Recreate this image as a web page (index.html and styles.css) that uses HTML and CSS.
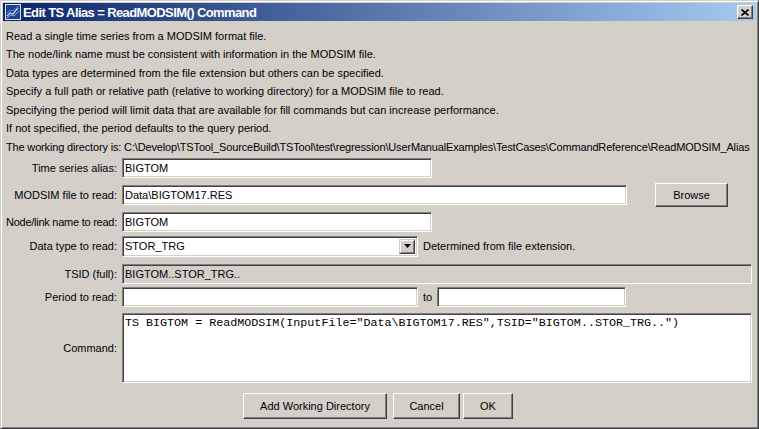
FILE: index.html
```html
<!DOCTYPE html>
<html>
<head>
<meta charset="utf-8">
<title>Edit TS Alias = ReadMODSIM() Command</title>
<link rel="stylesheet" href="styles.css">
</head>
<body>
<div class="window">
  <div class="titlebar">
    <svg class="appicon" width="16" height="16" viewBox="0 0 16 16">
      <rect x="0.5" y="0.5" width="15" height="15" fill="#1d3f8f" stroke="#dfe6f4"/>
      <polyline points="2,12 5,9 8,10 13,4" fill="none" stroke="#c9d6ef" stroke-width="1.2"/>
      <polyline points="2,14 6,11 9,12 14,7" fill="none" stroke="#8fa8dc" stroke-width="1"/>
      <polyline points="2,9 5,6 8,7 14,2" fill="none" stroke="#6d8ccc" stroke-width="1"/>
    </svg>
    <span class="title">Edit TS Alias = ReadMODSIM() Command</span>
    <span class="closebtn">
      <svg width="8" height="7" viewBox="0 0 8 7"><path d="M0.5 0.5 L7.5 6.5 M7.5 0.5 L0.5 6.5" stroke="#000" stroke-width="1.6" fill="none"/></svg>
    </span>
  </div>
  <div class="client">
    <div class="notes">
      <p>Read a single time series from a MODSIM format file.</p>
      <p>The node/link name must be consistent with information in the MODSIM file.</p>
      <p>Data types are determined from the file extension but others can be specified.</p>
      <p>Specify a full path or relative path (relative to working directory) for a MODSIM file to read.</p>
      <p>Specifying the period will limit data that are available for fill commands but can increase performance.</p>
      <p>If not specified, the period defaults to the query period.</p>
      <p class="workdir">The working directory is: C:\Develop\TSTool_SourceBuild\TSTool\test\regression\UserManualExamples\TestCases\CommandReference\ReadMODSIM_Alias</p>
    </div>
    <div class="form">
      <div class="row row-alias">
        <span class="lbl">Time series alias:</span>
        <div class="field w-short">BIGTOM</div>
      </div>
      <div class="row row-file">
        <span class="lbl off2">MODSIM file to read:</span>
        <div class="field w-file off2">Data\BIGTOM17.RES</div>
        <button class="btn btn-browse">Browse</button>
      </div>
      <div class="row row-node">
        <span class="lbl lbl-tight">Node/link name to read:</span>
        <div class="field w-short">BIGTOM</div>
      </div>
      <div class="row row-type">
        <span class="lbl lbl-combo">Data type to read:</span>
        <div class="combo">
          <span class="combo-text">STOR_TRG</span>
          <span class="combo-arrow"><svg width="7" height="4" viewBox="0 0 7 4"><path d="M0 0 H7 L3.5 4 Z" fill="#000"/></svg></span>
        </div>
        <span class="note">Determined from file extension.</span>
      </div>
      <div class="row row-tsid">
        <span class="lbl">TSID (full):</span>
        <div class="field field-disabled w-full">BIGTOM..STOR_TRG..</div>
      </div>
      <div class="row row-period">
        <span class="lbl">Period to read:</span>
        <div class="field w-period"></div>
        <span class="to">to</span>
        <div class="field w-period2"></div>
      </div>
      <div class="row row-command">
        <span class="lbl lbl-command">Command:</span>
        <div class="textarea">TS BIGTOM = ReadMODSIM(InputFile="Data\BIGTOM17.RES",TSID="BIGTOM..STOR_TRG..")</div>
      </div>
    </div>
    <div class="buttons">
      <button class="btn btn-add">Add Working Directory</button>
      <button class="btn btn-cancel">Cancel</button>
      <button class="btn btn-ok">OK</button>
    </div>
  </div>
</div>
</body>
</html>
```
FILE: styles.css
```css
* { box-sizing: border-box; }
html, body { margin: 0; padding: 0; }
body {
  width: 759px;
  height: 429px;
  overflow: hidden;
  background: #d4d0c8;
  font-family: "Liberation Sans", Arial, sans-serif;
  font-size: 11px;
  color: #000;
}
.window {
  width: 759px;
  height: 429px;
  border: 1px solid;
  border-color: #d4d0c8 #404040 #404040 #d4d0c8;
  box-shadow: inset 1px 1px #fff, inset -1px -1px #808080;
  padding: 2px;
  display: flex;
  flex-direction: column;
  background: #d4d0c8;
}
.titlebar {
  height: 18px;
  flex: none;
  display: flex;
  align-items: center;
  background: linear-gradient(to right, #0a246a, #a6caf0);
  padding: 0 3px 0 2px;
}
.appicon { flex: none; display: block; }
.title {
  flex: 1;
  margin-left: 2px;
  color: #fff;
  font-weight: bold;
  font-size: 13px;
  letter-spacing: -0.6px;
  white-space: nowrap;
}
.closebtn {
  width: 16px;
  height: 14px;
  flex: none;
  display: flex;
  align-items: center;
  justify-content: center;
  background: #d4d0c8;
  border: 1px solid;
  border-color: #fff #404040 #404040 #fff;
  box-shadow: inset -1px -1px #808080;
}
.closebtn svg { display: block; }
.client {
  flex: 1;
  display: flex;
  flex-direction: column;
  padding: 5.8px 3px 0 3px;
}
.notes p {
  margin: 0;
  line-height: 18.5px;
  white-space: nowrap;
}
.notes .workdir { letter-spacing: -0.16px; }
.form { margin-top: 1.7px; display: flex; flex-direction: column; }
.row { display: flex; align-items: flex-start; flex: none; }
.row-alias { height: 25px; }
.row-file { height: 29px; }
.row-node { height: 25px; }
.row-type { height: 27px; }
.row-tsid { height: 23px; }
.row-period { height: 26px; }
.row-command { height: 70px; }
.lbl {
  width: 111px;
  margin-right: 5px;
  flex: none;
  height: 20px;
  line-height: 20px;
  display: flex;
  justify-content: flex-end;
  white-space: nowrap;
}
.lbl-tight { letter-spacing: -0.25px; }
.lbl-combo { height: 21px; line-height: 21px; margin-top: -1px; }
.lbl-command { height: 70px; line-height: 70px; }
.field {
  height: 20px;
  line-height: 16px;
  background: #fff;
  border: 1px solid;
  border-color: #808080 #fff #fff #808080;
  box-shadow: inset 1px 1px #404040, inset -1px -1px #d4d0c8;
  padding: 1px 2px;
  white-space: nowrap;
  flex: none;
}
.field-disabled { background: #d4d0c8; }
.off2 { margin-top: 2px; }
.w-short { width: 310px; }
.w-file { width: 505px; }
.w-full { width: 630px; }
.w-period { width: 296px; }
.w-period2 { width: 189px; }
.combo {
  width: 296px;
  height: 21px;
  margin-top: -1px;
  display: flex;
  align-items: stretch;
  background: #fff;
  border: 1px solid;
  border-color: #808080 #fff #fff #808080;
  box-shadow: inset 1px 1px #404040, inset -1px -1px #d4d0c8;
  padding: 2px;
  flex: none;
}
.combo-text { flex: 1; line-height: 16px; margin-top: -1px; }
.combo-arrow {
  width: 16px;
  flex: none;
  display: flex;
  align-items: center;
  justify-content: center;
  background: #d4d0c8;
  border: 1px solid;
  border-color: #d4d0c8 #404040 #404040 #d4d0c8;
  box-shadow: inset 1px 1px #fff, inset -1px -1px #808080;
}
.combo-arrow svg { display: block; }
.note { margin-left: 5px; line-height: 19px; white-space: nowrap; }
.to { width: 19px; text-align: center; line-height: 20px; flex: none; }
.textarea {
  width: 630px;
  height: 70px;
  background: #fff;
  border: 1px solid;
  border-color: #808080 #fff #fff #808080;
  box-shadow: inset 1px 1px #404040, inset -1px -1px #d4d0c8;
  padding: 2px 2px;
  font-family: "Liberation Mono", "Courier New", monospace;
  font-size: 11.7px;
  line-height: 15px;
  white-space: nowrap;
  flex: none;
}
.btn {
  font-family: "Liberation Sans", Arial, sans-serif;
  font-size: 11px;
  color: #000;
  background: #d4d0c8;
  border: 1px solid;
  border-color: #fff #404040 #404040 #fff;
  box-shadow: inset -1px -1px #808080;
  padding: 0;
  margin: 0;
  flex: none;
}
.btn-browse { width: 73px; height: 24px; margin-left: 28px; }
.buttons {
  display: flex;
  justify-content: center;
  margin-top: 10px;
  padding-right: 3px;
}
.buttons .btn { height: 26px; }
.btn-add { width: 144px; }
.btn-cancel { width: 67px; margin-left: 6px; }
.btn-ok { width: 50px; margin-left: 3px; }
```
